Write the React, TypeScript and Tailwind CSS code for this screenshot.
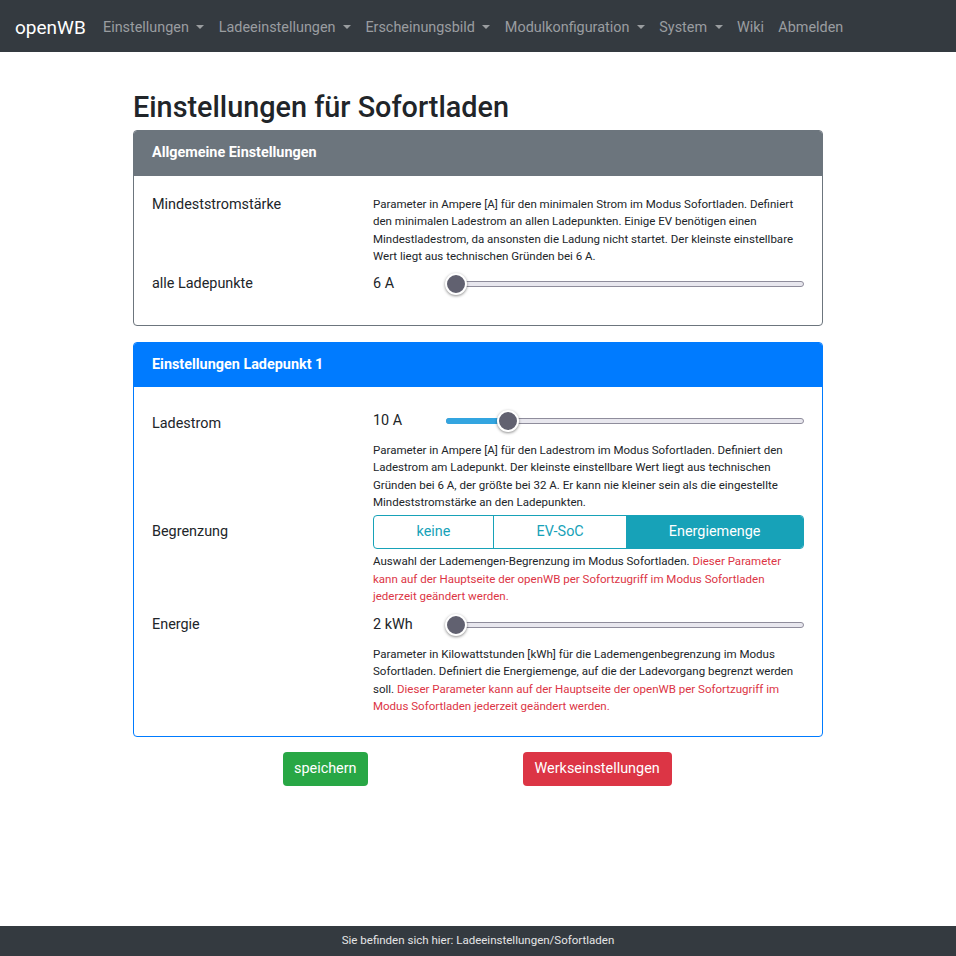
import React from "react";

const font = { fontFamily: "Roboto, 'Noto Sans', sans-serif" };

const navItems: { label: string; caret: boolean }[] = [
  { label: "Einstellungen", caret: true },
  { label: "Ladeeinstellungen", caret: true },
  { label: "Erscheinungsbild", caret: true },
  { label: "Modulkonfiguration", caret: true },
  { label: "System", caret: true },
  { label: "Wiki", caret: false },
  { label: "Abmelden", caret: false },
];

const Caret = () => (
  <span className="ml-[7.5px] inline-block h-0 w-0 border-l-[4.3px] border-r-[4.3px] border-t-[4.3px] border-l-transparent border-r-transparent border-t-current align-[3px]" />
);

// slider drawn by hand so it looks like the bootstrap-slider theme
const Slider = ({ pos }: { pos: number }) => (
  <div className="relative h-[22px] flex-1">
    <div className="absolute left-0 right-0 top-[8px] h-[6px] rounded-full border border-[#8f8d9c] bg-[#e8e7ee]" />
    {pos > 0 && (
      <div
        className="absolute left-0 top-[8px] h-[6px] rounded-l-full bg-[#33a5e0]"
        style={{ width: `calc((100% - 20px) * ${pos} + 10px)` }}
      />
    )}
    <div
      className="absolute top-0 h-[22px] w-[22px] rounded-full border-[2px] border-white bg-[#616170] shadow-[0_1px_3px_rgba(0,0,0,0.45)]"
      style={{ left: `calc((100% - 20px) * ${pos} - 1px)` }}
    />
  </div>
);

const ValueSlider = ({ value, pos }: { value: string; pos: number }) => (
  <div className="flex items-center">
    <div className="w-[73px] text-[14.4px]">{value}</div>
    <Slider pos={pos} />
  </div>
);

const Hint = ({ children }: { children: React.ReactNode }) => (
  <p className="text-[11.52px] leading-[17.28px] text-[#212529]">{children}</p>
);

const Red = ({ children }: { children: React.ReactNode }) => (
  <span className="text-[#dc3545]">{children}</span>
);

export default function App() {
  return (
    <div style={font} className="flex min-h-screen flex-col bg-white text-[#212529]">
      <nav className="flex h-[52px] items-center bg-[#343a40] px-[15px] pt-[4px]">
        <span className="mr-[10px] text-[19px] text-white">openWB</span>
        <ul className="flex items-center">
          {navItems.map((n) => (
            <li key={n.label} className="px-[7.2px] text-[14.4px] text-[#9a9da0]">
              {n.label}
              {n.caret && <Caret />}
            </li>
          ))}
        </ul>
      </nav>

      <main className="mx-auto w-[690px] flex-1">
        <h1 className="mt-[38px] mb-[5px] text-[28.8px] font-medium leading-[35px]">
          Einstellungen für Sofortladen
        </h1>

        <section className="overflow-hidden rounded-[4px] border border-[#6c757d]">
          <div className="bg-[#6c757d] px-[18px] py-[12px] text-[14.4px] font-bold leading-[20px] text-white">
            Allgemeine Einstellungen
          </div>
          <div className="border-t border-[#6c757d] px-[18px] pt-[20px] pb-[22px]">
            <div className="grid grid-cols-[221px_1fr]">
              <div className="text-[14.4px] leading-[18px]">Mindeststromstärke</div>
              <Hint>
                Parameter in Ampere [A] für den minimalen Strom im Modus Sofortladen. Definiert den
                minimalen Ladestrom an allen Ladepunkten. Einige EV benötigen einen Mindestladestrom,
                da ansonsten die Ladung nicht startet. Der kleinste einstellbare Wert liegt aus
                technischen Gründen bei 6 A.
              </Hint>
            </div>
            <div className="grid h-[38px] grid-cols-[221px_1fr] items-center">
              <div className="text-[14.4px]">alle Ladepunkte</div>
              <ValueSlider value="6 A" pos={0} />
            </div>
          </div>
        </section>

        <section className="mt-[16px] overflow-hidden rounded-[4px] border border-[#007bff]">
          <div className="bg-[#007bff] px-[18px] py-[12px] text-[14.4px] font-bold leading-[20px] text-white">
            Einstellungen Ladepunkt 1
          </div>
          <div className="px-[18px] pt-[20px] pb-[21px]">
            <div className="grid grid-cols-[221px_1fr]">
              <div className="pt-[6px] text-[14.4px] leading-[21.6px]">Ladestrom</div>
              <div>
                <div className="flex h-[28px] items-center">
                  <div className="flex-1">
                    <ValueSlider value="10 A" pos={4 / 26} />
                  </div>
                </div>
                <div className="mt-[7px]">
                  <Hint>
                    Parameter in Ampere [A] für den Ladestrom im Modus Sofortladen. Definiert den
                    Ladestrom am Ladepunkt. Der kleinste einstellbare Wert liegt aus technischen
                    Gründen bei 6 A, der größte bei 32 A. Er kann nie kleiner sein als die
                    eingestellte Mindeststromstärke an den Ladepunkten.
                  </Hint>
                </div>
              </div>
            </div>

            <div className="mt-[4px] grid grid-cols-[221px_1fr]">
              <div className="flex h-[34px] items-center text-[14.4px]">Begrenzung</div>
              <div>
                <div className="flex h-[34px] overflow-hidden rounded-[4px] border border-[#17a2b8] text-[14.4px]">
                  <div className="flex flex-auto items-center justify-center text-[#17a2b8]">keine</div>
                  <div className="flex flex-auto items-center justify-center border-l border-[#17a2b8] text-[#17a2b8]">
                    EV-SoC
                  </div>
                  <div className="flex flex-auto items-center justify-center bg-[#17a2b8] text-white">
                    Energiemenge
                  </div>
                </div>
                <div className="mt-[4px]">
                  <Hint>
                    Auswahl der Lademengen-Begrenzung im Modus Sofortladen.{" "}
                    <Red>
                      Dieser Parameter kann auf der Hauptseite der openWB per Sofortzugriff im
                      Modus Sofortladen jederzeit geändert werden.
                    </Red>
                  </Hint>
                </div>
              </div>
            </div>

            <div className="mt-[1px] grid grid-cols-[221px_1fr]">
              <div className="flex h-[38px] items-center text-[14.4px]">Energie</div>
              <div>
                <div className="flex h-[38px] items-center">
                  <div className="flex-1">
                    <ValueSlider value="2 kWh" pos={0} />
                  </div>
                </div>
                <div className="mt-[2px]">
                  <Hint>
                    Parameter in Kilowattstunden [kWh] für die Lademengenbegrenzung im Modus
                    Sofortladen. Definiert die Energiemenge, auf die der Ladevorgang begrenzt werden
                    soll.{" "}
                    <Red>
                      Dieser Parameter kann auf der Hauptseite der openWB per Sofortzugriff im
                      Modus Sofortladen jederzeit geändert werden.
                    </Red>
                  </Hint>
                </div>
              </div>
            </div>
          </div>
        </section>

        <div className="mt-[15px] flex pl-[150px]">
          <button className="h-[34px] rounded-[4px] bg-[#28a745] px-[11px] text-[14.4px] text-white">
            speichern
          </button>
          <button className="ml-[155px] h-[34px] rounded-[4px] bg-[#dc3545] px-[12px] text-[14.4px] text-white">
            Werkseinstellungen
          </button>
        </div>
      </main>

      <footer className="flex h-[30px] items-center justify-center bg-[#343a40] text-[11.52px] text-[#e4e5e6]">
        Sie befinden sich hier: Ladeeinstellungen/Sofortladen
      </footer>
    </div>
  );
}
